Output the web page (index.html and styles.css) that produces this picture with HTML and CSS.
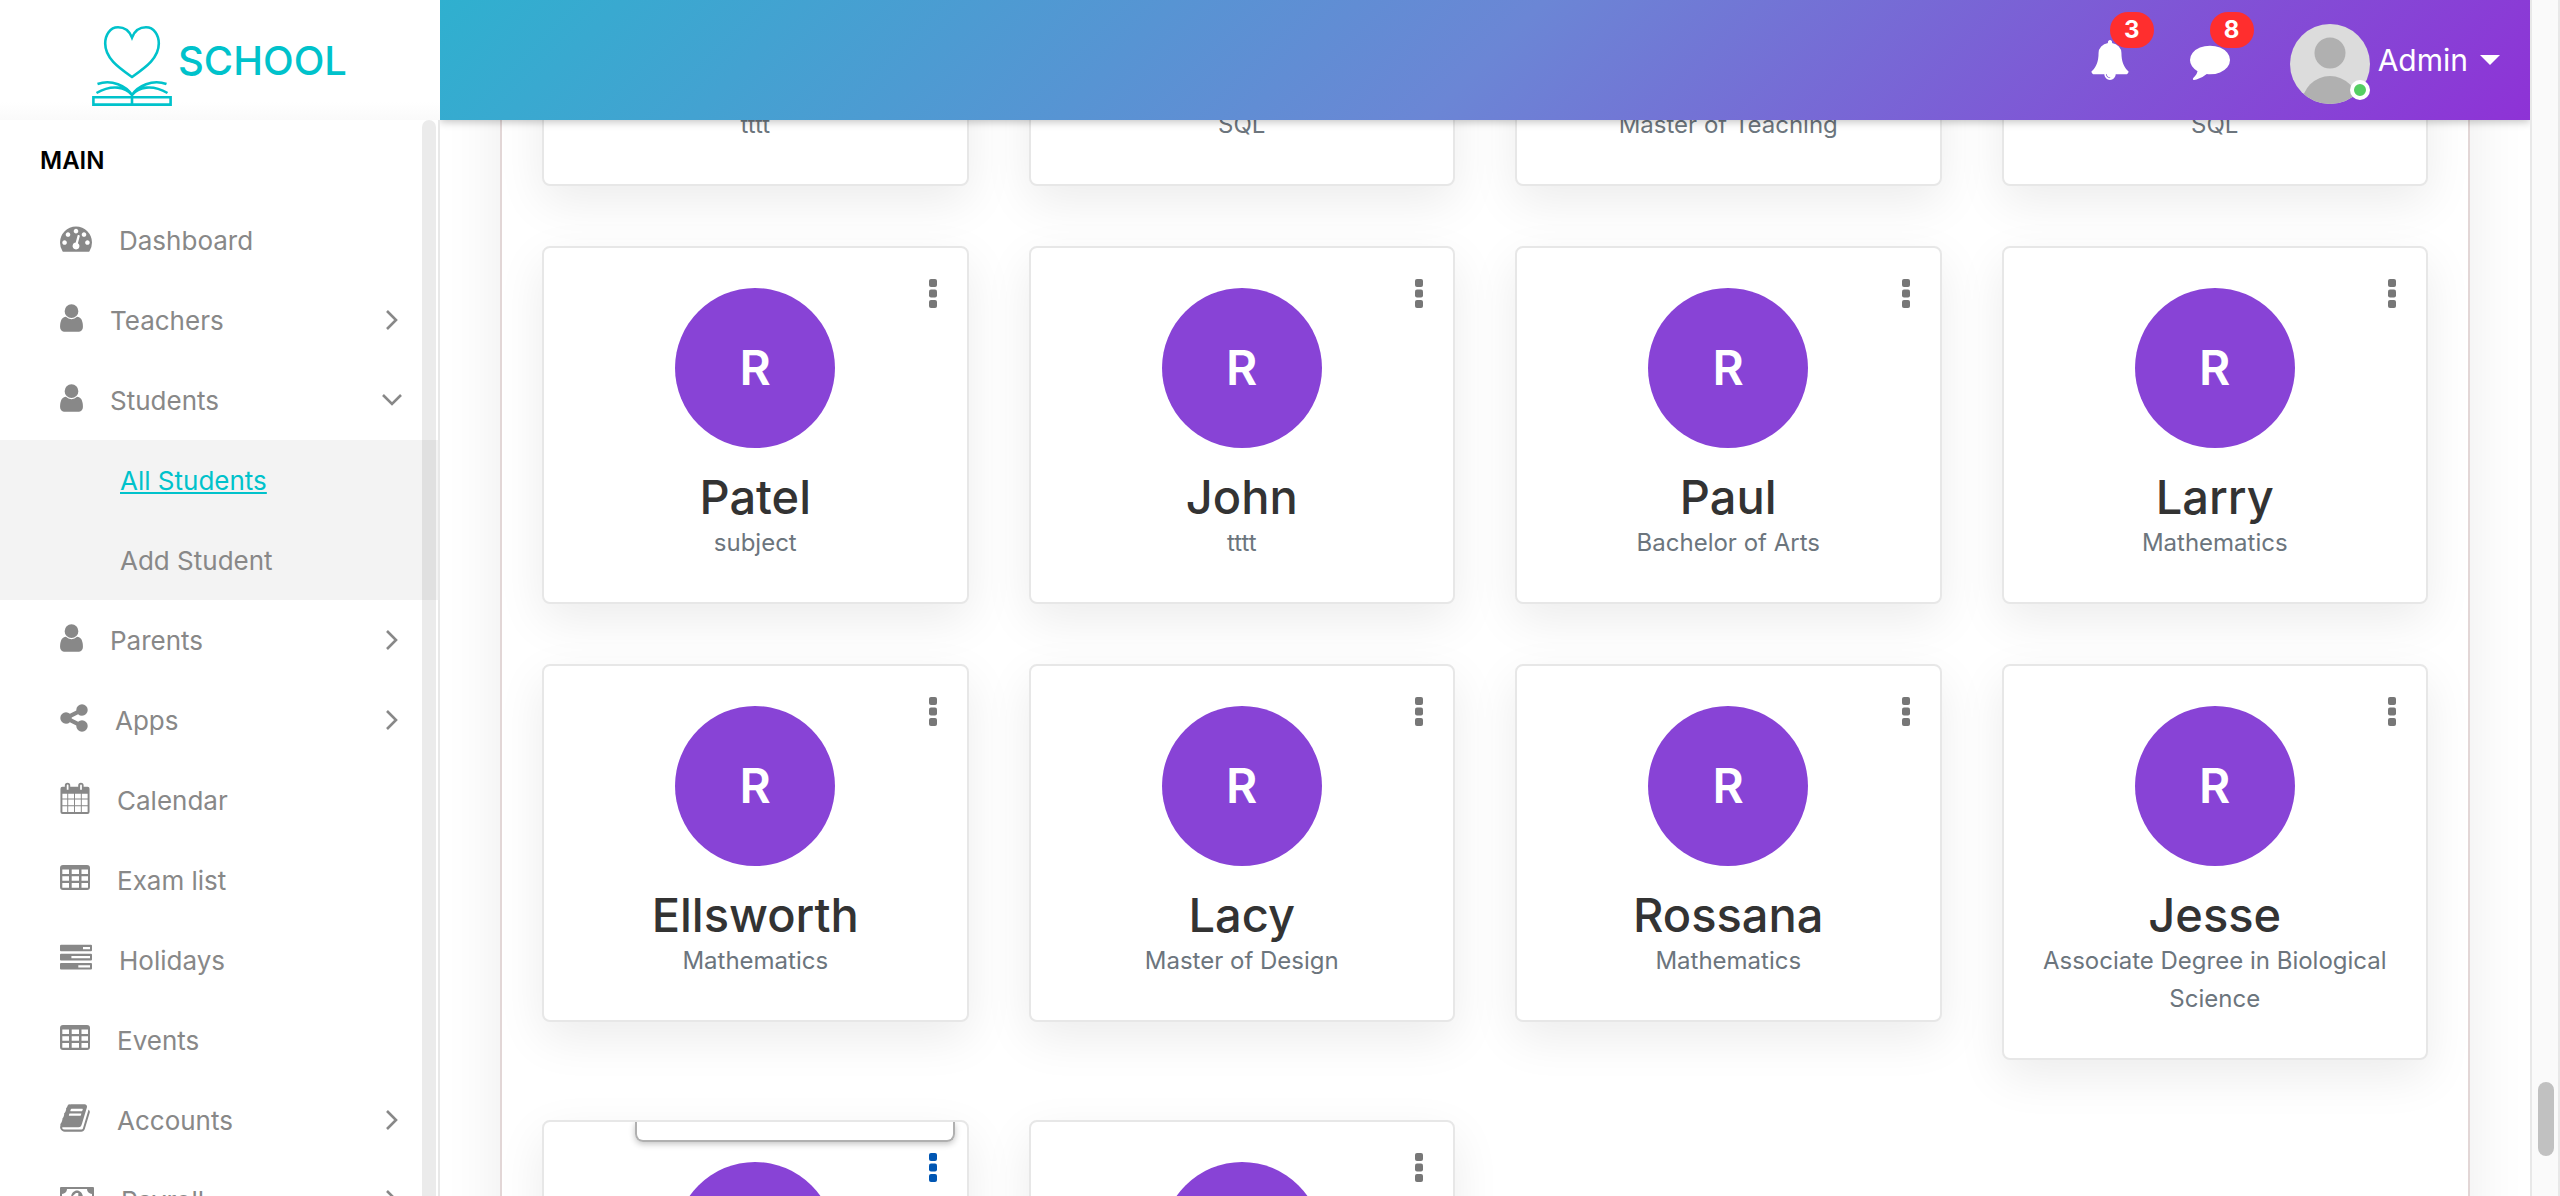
FILE: index.html
```html
<!DOCTYPE html>
<html lang="en">
<head>
<meta charset="utf-8">
<title>School - All Students</title>
<link rel="stylesheet" href="styles.css">
</head>
<body>
<svg class="sprite" aria-hidden="true">
  <symbol id="gauge" viewBox="0 0 1792 1792"><path d="M384 1152q0-53-37.500-90.500t-90.500-37.500-90.500 37.500-37.500 90.500 37.500 90.500 90.500 37.500 90.500-37.500 37.500-90.500zm192-448q0-53-37.500-90.500t-90.500-37.500-90.500 37.500-37.500 90.500 37.500 90.500 90.500 37.500 90.500-37.500 37.500-90.500zm428 481l101-382q6-26-7.500-48.500t-38.500-29.500-48 6.500-30 39.500l-101 382q-60 5-107 43.500t-63 98.500q-20 77 20 146t117 89 146-20 89-117q16-60-6-117t-72-91zm660-33q0-53-37.500-90.500t-90.500-37.500-90.500 37.500-37.500 90.500 37.500 90.500 90.500 37.500 90.500-37.500 37.500-90.500zm-640-640q0-53-37.500-90.500t-90.500-37.500-90.500 37.500-37.500 90.500 37.500 90.500 90.500 37.500 90.500-37.500 37.500-90.500zm448 192q0-53-37.500-90.500t-90.500-37.500-90.500 37.500-37.500 90.500 37.500 90.500 90.500 37.500 90.500-37.500 37.500-90.500zm320 448q0 261-141 483-19 29-54 29h-1402q-35 0-54-29-141-221-141-483 0-182 71-348t191-286 286-191 348-71 348 71 286 191 191 286 71 348z"/></symbol>
  <symbol id="user" viewBox="256 0 1280 1792"><path d="M1536 1399q0 109-62.500 187t-150.500 78h-854q-88 0-150.500-78t-62.500-187q0-85 8.500-160.500t31.500-152 58.500-131 94-89 134.500-34.500q131 128 313 128t313-128q76 0 134.500 34.500t94 89 58.500 131 31.500 152 8.500 160.500zm-256-887q0 159-112.500 271.500t-271.500 112.500-271.500-112.500-112.500-271.500 112.500-271.500 271.500-112.500 271.500 112.500 112.500 271.500z"/></symbol>
  <symbol id="share" viewBox="128 0 1536 1792"><path d="M1344 1024q133 0 226.500 93.500t93.500 226.500-93.500 226.500-226.500 93.500-226.500-93.500-93.500-226.500q0-12 2-34l-360-180q-92 86-218 86-133 0-226.500-93.500t-93.500-226.500 93.500-226.500 226.500-93.500q126 0 218 86l360-180q-2-22-2-34 0-133 93.500-226.500t226.500-93.500 226.500 93.500 93.500 226.500-93.500 226.500-226.500 93.500q-126 0-218-86l-360 180q2 22 2 34t-2 34l360 180q92-86 218-86z"/></symbol>
  <symbol id="calendar" viewBox="0 0 30 33"><path fill-rule="evenodd" d="M2 5h2.500V3.500a2.800 2.800 0 0 1 5.600 0V5h8.200V3.500a2.800 2.800 0 0 1 5.600 0V5H28a2 2 0 0 1 2 2v24a2 2 0 0 1-2 2H2a2 2 0 0 1-2-2V7a2 2 0 0 1 2-2zM6.500 3.500V8h1.800V3.500a.9.900 0 0 0-1.800 0zM20.300 3.500V8h1.800V3.500a.9.900 0 0 0-1.800 0zM2 12v5h5v-5zm6 0v5h6v-5zm7 0v5h6v-5zm7 0v5h6v-5zM2 18v6h5v-6zm6 0v6h6v-6zm7 0v6h6v-6zm7 0v6h6v-6zM2 25v6h5v-6zm6 0v6h6v-6zm7 0v6h6v-6zm7 0v6h6v-6z"/></symbol>
  <symbol id="table" viewBox="0 0 30 32"><path fill-rule="evenodd" d="M3 3h24a3 3 0 0 1 3 3v19a3 3 0 0 1-3 3H3a3 3 0 0 1-3-3V6a3 3 0 0 1 3-3zM2.300 7.500v4.500H9V7.500zm9.400 0v4.500H19V7.500zm9.800 0v4.500H28V7.500zM2.300 14.300v4.400H9v-4.400zm9.400 0v4.400H19v-4.400zm9.800 0v4.400H28v-4.400zM2.300 21v4.800H9V21zm9.400 0v4.800H19V21zm9.800 0v4.800H28V21z"/></symbol>
  <symbol id="tasks" viewBox="0 0 32 32"><path fill-rule="evenodd" d="M1 2.700h30a1 1 0 0 1 1 1v4.600a1 1 0 0 1-1 1H1a1 1 0 0 1-1-1V3.700a1 1 0 0 1 1-1zM23 5v2.200h7V5zM1 11.800h30a1 1 0 0 1 1 1v4.600a1 1 0 0 1-1 1H1a1 1 0 0 1-1-1v-4.600a1 1 0 0 1 1-1zM11.400 14v2.300H30V14zM1 21h30a1 1 0 0 1 1 1v4.600a1 1 0 0 1-1 1H1a1 1 0 0 1-1-1V22a1 1 0 0 1 1-1zM18.300 23.200v2.300H30v-2.300z"/></symbol>
  <symbol id="book" viewBox="66 0 1664 1792"><path d="M1703 478q40 57 18 129l-275 906q-19 64-76.500 107.500t-122.500 43.500h-923q-77 0-148.500-53.500t-99.500-131.500q-24-67-2-127 0-4 3-27t4-37q1-8-3-21.500t-3-19.500q2-11 8-21t16.500-23.500 16.500-23.500q23-38 45-91.500t30-91.500q3-10 .5-30t-.5-28q3-11 17-28t17-23q21-36 42-92t25-90q1-9-2.500-32t.5-28q4-13 22-30.500t22-22.500q19-26 42.500-84.500t27.500-96.500q1-8-3-25.500t-2-26.500q2-8 9-18t18-23 17-21q8-12 16.500-30.500t15-35 16-36 19.500-32 26.500-23.500 36-11.500 47.500 5.500l-1 3q38-9 51-9h761q74 0 114 56t18 130l-274 906q-36 119-71.500 153.500t-128.500 34.500h-869q-27 0-38 15-11 16-1 43 24 70 144 70h923q29 0 56-15.500t35-41.500l300-987q7-22 5-57 38 15 59 43zm-1064 2q-4 13 2 22.500t20 9.500h608q13 0 25.500-9.500t16.500-22.500l21-64q4-13-2-22.500t-20-9.500h-608q-13 0-25.500 9.500t-16.500 22.500zm-83 256q-4 13 2 22.500t20 9.500h608q13 0 25.500-9.500t16.500-22.500l21-64q4-13-2-22.500t-20-9.500h-608q-13 0-25.500 9.500t-16.500 22.500z"/></symbol>
  <symbol id="money" viewBox="0 0 34 32"><path fill-rule="evenodd" d="M1 5h32a1 1 0 0 1 1 1v20a1 1 0 0 1-1 1H1a1 1 0 0 1-1-1V6a1 1 0 0 1 1-1zM7 7a5 5 0 0 1-5 5v8a5 5 0 0 1 5 5h20a5 5 0 0 1 5-5v-8a5 5 0 0 1-5-5z"/><path fill-rule="evenodd" d="M17 8.500c3.500 0 6 3.300 6 7.500s-2.500 7.500-6 7.500-6-3.300-6-7.500 2.500-7.500 6-7.500zM16 11l-3 2.800 1.200 1.300 1.500-1.200V19H14v1.700h6V19h-1.700v-8z"/></symbol>
  <symbol id="bell" viewBox="0 0 1792 1792"><path d="M912 1696q0-16-16-16-59 0-101.500-42.500t-42.500-101.500q0-16-16-16t-16 16q0 73 51.500 124.500t124.500 51.500q16 0 16-16zm816-288q0 52-38 90t-90 38h-448q0 106-75 181t-181 75-181-75-75-181h-448q-52 0-90-38t-38-90q50-42 91-88t85-119.500 74.500-158.500 50-206 19.500-260q0-152 117-282.500t307-158.500q-8-19-8-39 0-40 28-68t68-28 68 28 28 68q0 20-8 39 190 28 307 158.500t117 282.500q0 139 19.500 260t50 206 74.500 158.500 85 119.500 91 88z"/></symbol>
  <symbol id="comment" viewBox="0 0 1792 1792"><path d="M1792 896q0 174-120 321.500t-326 233-450 85.500q-70 0-145-8-198 175-460 242-49 14-114 22h-5q-15 0-27-10.500t-16-27.500v-1q-3-4-.5-12t2-10 4.500-9.500l6-9 7-8.500 8-9q7-8 31-34.500t34.500-38 31-39.500 32.500-51 27-59 26-76q-157-89-247.500-220t-90.500-281q0-174 120-321.500t326-233 450-85.500 450 85.500 326 233 120 321.500z"/></symbol>
  <symbol id="dots" viewBox="0 0 8 29"><rect width="8" height="8" rx="2"/><rect y="10.500" width="8" height="8" rx="2"/><rect y="21" width="8" height="8" rx="2"/></symbol>
  <symbol id="chevron" viewBox="0 0 20 20"><path d="M5 1l9 9-9 9" fill="none" stroke="currentColor" stroke-width="2.600"/></symbol>
</svg>

<div class="app">
  <aside class="sidebar">
    <a class="brand" href="#">
      <svg class="brand-mark" viewBox="0 0 80 82" aria-hidden="true"><g fill="none" stroke="currentColor" stroke-width="2.600"><path d="M40 12.500C37 5 32 2.300 26 2.300 18 2.300 13.200 10 13.200 18.500 13.200 33 26 42 40 52 54 42 66.800 33 66.800 18.500 66.800 10 62 2.300 54 2.300 48 2.300 43 5 40 12.500z"/><path d="M40 70C34 61 20 54 5.500 59M40 70C34 62 20 59 4.500 68M40 70C46 61 60 54 74.500 59M40 70C46 62 60 59 75.500 68M1.400 72.200h77.200v7.400H1.400zM40 68v12"/></g></svg>
      <span>SCHOOL</span>
    </a>
    <nav class="menu">
      <h2 class="menu-title">MAIN</h2>
      <ul>
        <li><a href="#"><svg class="w32"><use href="#gauge"/></svg>Dashboard</a></li>
        <li><a href="#"><svg class="w23"><use href="#user"/></svg>Teachers<svg class="chev"><use href="#chevron"/></svg></a></li>
        <li><a href="#"><svg class="w23"><use href="#user"/></svg>Students<svg class="chev open"><use href="#chevron"/></svg></a>
          <ul class="submenu">
            <li><a class="active" href="#">All Students</a></li>
            <li><a href="#">Add Student</a></li>
          </ul>
        </li>
        <li><a href="#"><svg class="w23"><use href="#user"/></svg>Parents<svg class="chev"><use href="#chevron"/></svg></a></li>
        <li><a href="#"><svg class="w28"><use href="#share"/></svg>Apps<svg class="chev"><use href="#chevron"/></svg></a></li>
        <li><a href="#"><svg class="w30"><use href="#calendar"/></svg>Calendar</a></li>
        <li><a href="#"><svg class="w30"><use href="#table"/></svg>Exam list</a></li>
        <li><a href="#"><svg class="w32"><use href="#tasks"/></svg>Holidays</a></li>
        <li><a href="#"><svg class="w30"><use href="#table"/></svg>Events</a></li>
        <li><a href="#"><svg class="w30"><use href="#book"/></svg>Accounts<svg class="chev"><use href="#chevron"/></svg></a></li>
        <li><a href="#"><svg class="w34"><use href="#money"/></svg>Payroll<svg class="chev"><use href="#chevron"/></svg></a></li>
      </ul>
      <div class="menu-scroll"></div>
    </nav>
  </aside>

  <div class="page">
    <header class="topbar">
      <button class="notice" aria-label="Notifications"><svg><use href="#bell"/></svg><span class="badge">3</span></button>
      <button class="notice" aria-label="Messages"><svg><use href="#comment"/></svg><span class="badge">8</span></button>
      <button class="account">
        <span class="account-photo">
          <svg viewBox="0 0 80 80" aria-hidden="true"><clipPath id="round"><circle cx="40" cy="40" r="40"/></clipPath><g clip-path="url(#round)"><path fill="#dcdcdc" d="M0 0h80v80H0z"/><circle cx="40" cy="29" r="15.500" fill="#b0b0b0"/><circle cx="40" cy="80" r="28" fill="#b0b0b0"/></g></svg>
          <span class="status"></span>
        </span>
        Admin
        <span class="caret"></span>
      </button>
    </header>

    <main class="content">
      <section class="panel">
        <article class="card"><p>tttt</p></article>
        <article class="card"><p>SQL</p></article>
        <article class="card"><p>Master of Teaching</p></article>
        <article class="card"><p>SQL</p></article>

        <article class="card"><button class="more" aria-label="Options"><svg><use href="#dots"/></svg></button><div class="initial">R</div><h3>Patel</h3><p>subject</p></article>
        <article class="card"><button class="more" aria-label="Options"><svg><use href="#dots"/></svg></button><div class="initial">R</div><h3>John</h3><p>tttt</p></article>
        <article class="card"><button class="more" aria-label="Options"><svg><use href="#dots"/></svg></button><div class="initial">R</div><h3>Paul</h3><p>Bachelor of Arts</p></article>
        <article class="card"><button class="more" aria-label="Options"><svg><use href="#dots"/></svg></button><div class="initial">R</div><h3>Larry</h3><p>Mathematics</p></article>

        <article class="card"><button class="more" aria-label="Options"><svg><use href="#dots"/></svg></button><div class="initial">R</div><h3>Ellsworth</h3><p>Mathematics</p></article>
        <article class="card"><button class="more" aria-label="Options"><svg><use href="#dots"/></svg></button><div class="initial">R</div><h3>Lacy</h3><p>Master of Design</p></article>
        <article class="card"><button class="more" aria-label="Options"><svg><use href="#dots"/></svg></button><div class="initial">R</div><h3>Rossana</h3><p>Mathematics</p></article>
        <article class="card"><button class="more" aria-label="Options"><svg><use href="#dots"/></svg></button><div class="initial">R</div><h3>Jesse</h3><p>Associate Degree in Biological Science</p></article>

        <article class="card"><div class="dropdown"></div><button class="more hover" aria-label="Options"><svg><use href="#dots"/></svg></button><div class="initial"></div></article>
        <article class="card"><button class="more" aria-label="Options"><svg><use href="#dots"/></svg></button><div class="initial"></div></article>
      </section>
    </main>
  </div>

  <div class="page-scroll"><div class="page-thumb"></div></div>
</div>
</body>
</html>
```
FILE: styles.css
```css
* {
  box-sizing: border-box;
}

body {
  margin: 0;
  background: #fff;
  color: #333;
  font-family: Inter, "Liberation Sans", sans-serif;
  font-size: 26px;
}

a {
  color: inherit;
  text-decoration: none;
}

button {
  padding: 0;
  border: 0;
  background: none;
  color: inherit;
  font: inherit;
}

svg {
  display: block;
  fill: currentColor;
}

ul {
  margin: 0;
  padding: 0;
  list-style: none;
}

.sprite {
  display: none;
}

.app {
  display: flex;
  height: 100vh;
  overflow: hidden;
}

/* Sidebar */
.sidebar {
  display: flex;
  flex: none;
  flex-direction: column;
  width: 440px;
}

.brand {
  display: flex;
  flex: none;
  align-items: center;
  height: 120px;
  padding: 12px 0 0 92px;
  gap: 6px;
  background: linear-gradient(#fff 85%, #fafafa);
  color: #00c2cb;
  font-size: 40px;
  font-weight: 500;
}

.brand span {
  padding-bottom: 12px;
}

.brand-mark {
  width: 80px;
  height: 82px;
}

.menu {
  position: relative;
  flex: 1;
  min-height: 0;
  overflow: hidden;
  border-right: 2px solid #e8e8e8;
  color: #888;
}

.menu-title {
  margin: 0;
  padding-left: 40px;
  color: #000;
  font-size: 24px;
  font-weight: 600;
  line-height: 82px;
  height: 80px;
}

.menu a {
  display: flex;
  align-items: center;
  height: 80px;
  padding: 0 36px 0 60px;
  gap: 27px;
}

.menu svg {
  flex: none;
  height: 32px;
  margin-bottom: 4px;
}

.w23 { width: 23px; }
.w28 { width: 28px; }
.w30 { width: 30px; }
.w32 { width: 32px; }
.w34 { width: 34px; }

.menu .chev {
  width: 20px;
  height: 20px;
  margin: 0 0 0 auto;
}

.chev.open {
  transform: rotate(90deg);
}

.submenu {
  background: #f3f3f3;
}

.menu .submenu a {
  padding-left: 120px;
}

.menu .submenu .active {
  color: #00c2cb;
  text-decoration: underline;
}

.menu-scroll {
  position: absolute;
  top: 0;
  right: 2px;
  bottom: 0;
  width: 14px;
  border-radius: 7px 7px 0 0;
  background: rgba(0, 0, 0, 0.08);
}

/* Top bar */
.page {
  display: flex;
  flex: 1;
  flex-direction: column;
  min-width: 0;
}

.topbar {
  z-index: 1;
  display: flex;
  flex: none;
  justify-content: flex-end;
  height: 120px;
  padding-right: 30px;
  background: linear-gradient(135deg, #2fb0cf, #6b86d5 50%, #8e32d6);
  box-shadow: 0 2px 8px rgba(0, 0, 0, 0.24);
  clip-path: inset(0 0 -20px 0);
  color: #fff;
}

.notice {
  position: relative;
  width: 100px;
  height: 120px;
  padding-left: 30px;
}

.notice svg {
  width: 40px;
  height: 40px;
}

.badge {
  position: absolute;
  top: 12px;
  right: 6px;
  width: 44px;
  border-radius: 18px;
  background: #ff2e2e;
  font-size: 24px;
  font-weight: 700;
  line-height: 36px;
}

.account {
  display: flex;
  align-items: center;
  margin-left: 30px;
  gap: 8px;
  font-size: 30px;
}

.account-photo {
  position: relative;
  width: 80px;
  margin-top: 8px;
}

.status {
  position: absolute;
  right: 0;
  bottom: 4px;
  width: 20px;
  height: 20px;
  border: 4px solid #fff;
  border-radius: 50%;
  background: #55ce63;
}

.caret {
  margin-left: 4px;
  border: 10px solid transparent;
  border-top-color: #fff;
  border-bottom-width: 0;
}

/* Students */
.content {
  flex: 1;
  min-height: 0;
  padding: 0 60px;
  overflow: hidden;
}

/* Scrolled up so that the first row sits partly under the top bar */
.panel {
  display: grid;
  grid-template-columns: repeat(4, 1fr);
  align-items: start;
  gap: 60px;
  margin-top: -100px;
  padding: 42px 40px;
  border: 2px solid #e2d6d6;
  box-shadow: 0 0 56px rgba(0, 0, 0, 0.08);
}

.card {
  position: relative;
  padding: 40px 36px;
  overflow: hidden;
  border: 2px solid #e7e7e7;
  border-radius: 8px;
  background: #fff;
  box-shadow: 0 16px 48px rgba(0, 0, 0, 0.08);
  text-align: center;
}

.initial {
  width: 160px;
  height: 160px;
  margin: 0 auto 22px;
  border-radius: 50%;
  background: #8843d6;
  color: #fff;
  font-size: 48px;
  font-weight: 600;
  line-height: 160px;
}

.card h3 {
  margin: 0;
  font-size: 47px;
  font-weight: 500;
  line-height: 54px;
}

.card p {
  margin: 0;
  color: #6c757d;
  font-size: 24px;
  line-height: 38px;
}

.more {
  position: absolute;
  top: 31px;
  right: 30px;
  color: #777;
}

.more svg {
  width: 8px;
  height: 29px;
}

.more.hover {
  color: #0056b3;
}

.dropdown {
  position: absolute;
  top: 0;
  right: 12px;
  width: 320px;
  height: 20px;
  border: 2px solid #b0b0b0;
  border-top: 0;
  border-radius: 0 0 8px 8px;
  box-shadow: 0 2px 6px rgba(0, 0, 0, 0.24);
}

/* Page scroll bar */
.page-scroll {
  flex: none;
  width: 30px;
  padding: 1082px 4px 0 6px;
  border: solid #e8e8e8;
  border-width: 0 2px;
  background: #fafafa;
}

.page-thumb {
  width: 16px;
  height: 74px;
  border-radius: 8px;
  background: #c1c1c1;
}
```
